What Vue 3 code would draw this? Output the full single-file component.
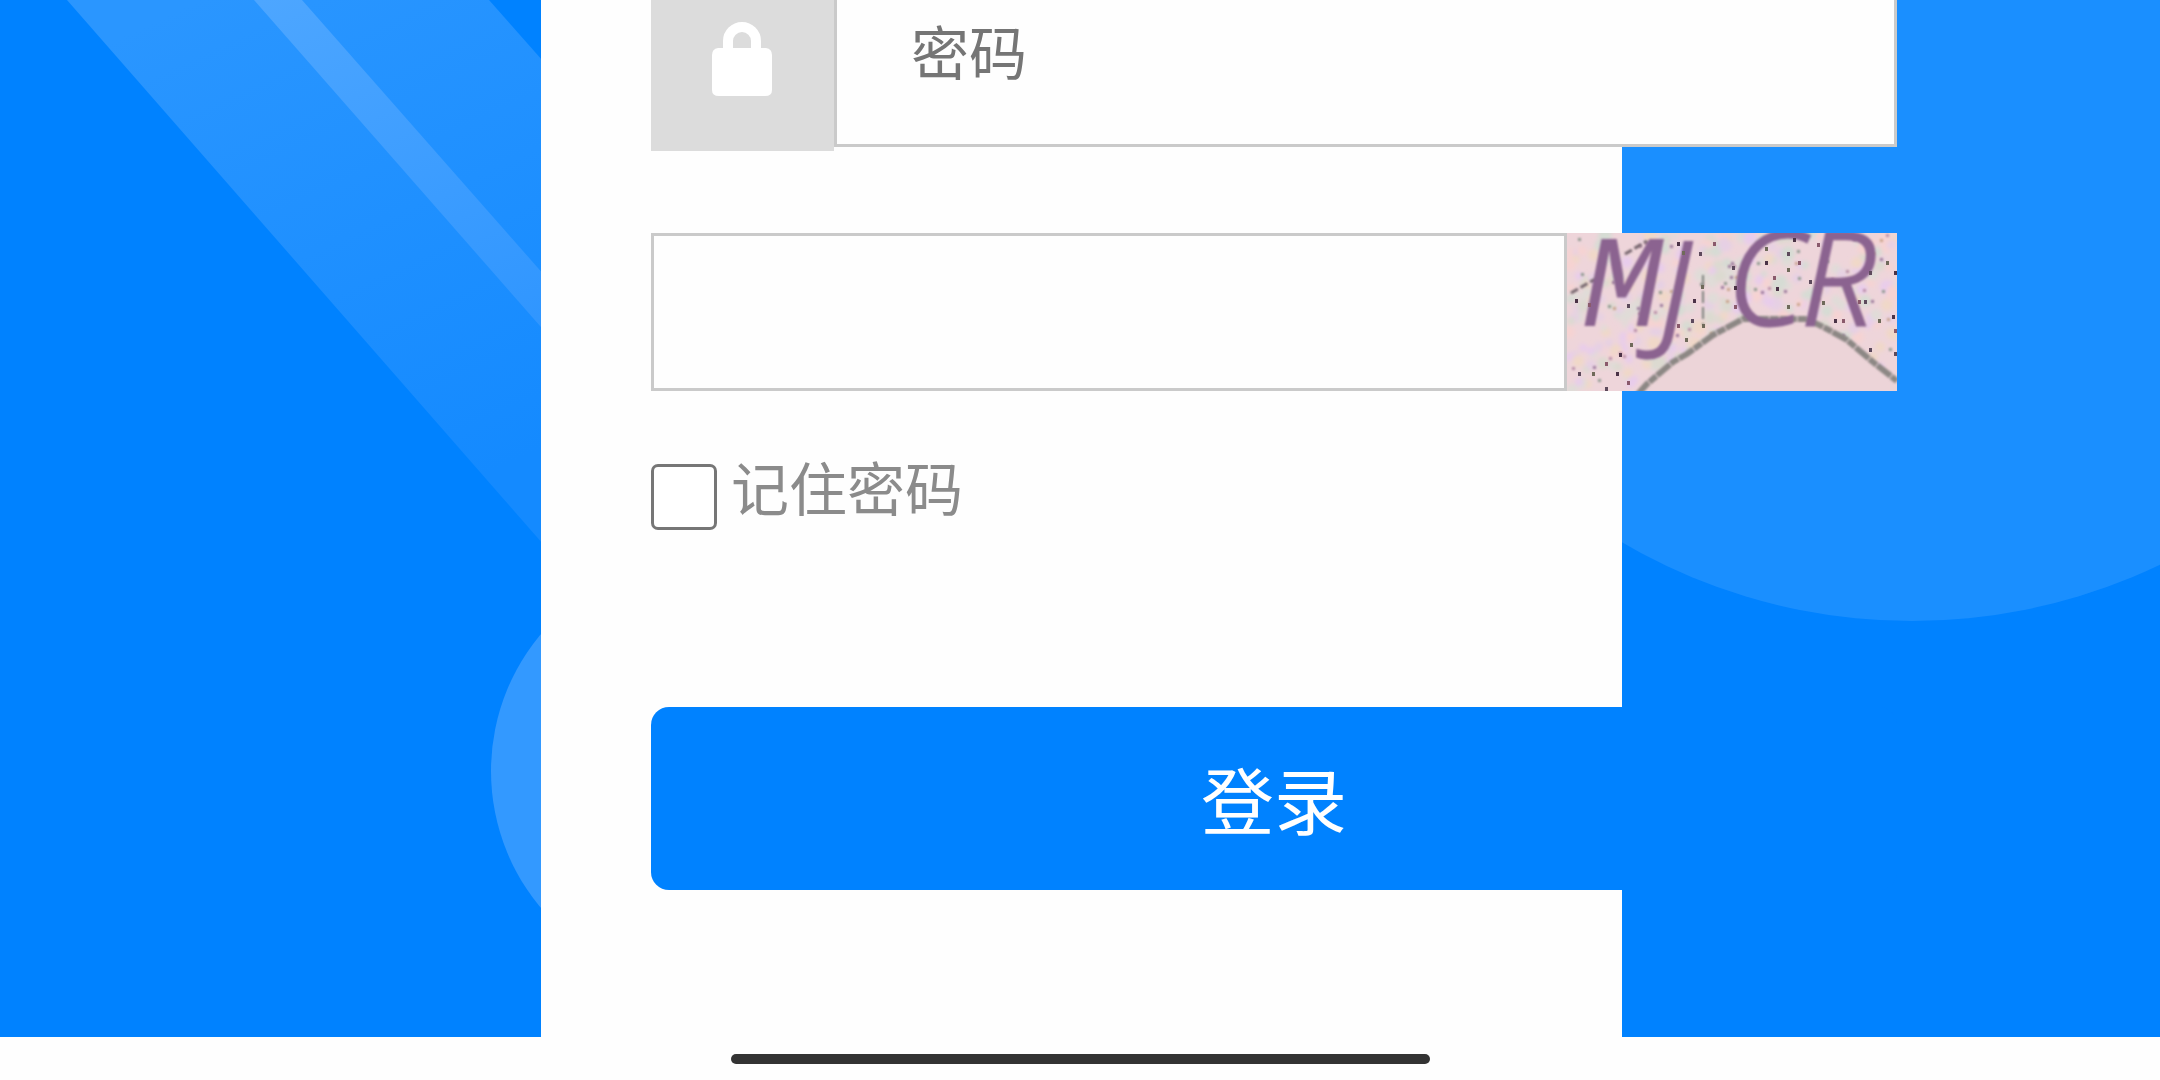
<script setup>
import { ref } from 'vue'

const password = ref('')
const captcha = ref('')
const remember = ref(false)

// Small seeded generator so the captcha grain is stable between renders
let seed = 20
const rand = () => {
  seed = (seed * 16807) % 2147483647
  return seed / 2147483647
}

const tints = ['#dcdad0', '#e8ccec', '#f6d3d2', '#d6dcd4', '#f0d8c8', '#e6d0e4', '#e0dcd8']
const patches = Array.from({ length: 420 }, (_, i) => ({
  x: Math.round(rand() * 330),
  y: Math.round(rand() * 158),
  r: 3 + Math.round(rand() * 4),
  fill: tints[i % tints.length],
}))

const inks = ['#b98fa8', '#8f9a90', '#c9a48c', '#9c7a9c']
const grains = Array.from({ length: 90 }, (_, i) => ({
  x: Math.round(rand() * 328),
  y: Math.round(rand() * 156),
  fill: inks[i % inks.length],
}))

const speckInks = ['#4b3347', '#8a5a6c', '#5d4a5c', '#6f6a5a']
const specks = [
  [9, 68], [22, 72], [61, 73], [116, 20], [111, 11], [147, 11], [133, 21], [135, 54],
  [127, 68], [111, 93], [125, 88], [136, 93], [168, 55], [168, 74], [166, 35], [199, 16],
  [199, 30], [207, 45], [221, 21], [221, 37], [227, 7], [232, 30], [243, 49], [221, 74],
  [210, 56], [251, 12], [303, 40], [320, 30], [328, 40], [292, 69], [298, 69], [312, 88],
  [326, 84], [328, 98], [303, 117], [256, 70], [268, 88], [276, 88], [328, 121], [64, 112],
  [53, 122], [39, 131], [12, 141], [26, 141], [50, 141], [61, 150], [39, 156], [119, 107],
]

const letters = [
  { char: 'M', x: 16, y: 93, face: 'mono' },
  { char: 'J', x: 92, y: 102, face: 'sans' },
  { char: 'C', x: 160, y: 92, face: 'sans' },
  { char: 'R', x: 234, y: 92, face: 'sans' },
]
</script>

<template>
  <div class="page">
    <main class="stage">
      <svg class="backdrop" viewBox="0 0 2160 1037" preserveAspectRatio="xMinYMin slice" aria-hidden="true">
        <defs>
          <linearGradient id="beam" gradientUnits="userSpaceOnUse" x1="200" y1="0" x2="430" y2="500">
            <stop offset="0" stop-color="#2a96ff" />
            <stop offset="1" stop-color="#148aff" />
          </linearGradient>
          <linearGradient id="ray" gradientUnits="userSpaceOnUse" x1="260" y1="0" x2="430" y2="370">
            <stop offset="0" stop-color="#4da6ff" />
            <stop offset="1" stop-color="#3096ff" />
          </linearGradient>
        </defs>
        <path d="M67 0H489L641 172V656Z" fill="url(#beam)" />
        <path d="M254 0H302L641 385V441Z" fill="url(#ray)" />
        <circle cx="704" cy="771" r="213" fill="#3399ff" />
        <circle cx="1912" cy="46" r="575" fill="#1a8fff" />
      </svg>

      <section class="card">
        <form class="login" @submit.prevent>
          <div class="row password-row">
            <label class="lock" for="password" aria-label="密码">
              <svg width="60" height="76" viewBox="0 0 60 76" aria-hidden="true">
                <path d="M16 32V20a14 14 0 0 1 28 0v12" fill="none" stroke="#fff" stroke-width="10" />
                <path d="M6 27H54Q60 28 60 34V69Q60 75 53 75H7Q0 75 0 69V34Q0 28 6 27Z" fill="#fff" />
              </svg>
            </label>
            <input id="password" v-model="password" class="field password" type="password" placeholder="密码" />
          </div>

          <div class="row captcha-row">
            <input v-model="captcha" class="field code" type="text" aria-label="验证码" />
            <svg class="captcha" viewBox="0 0 330 158" role="img" aria-label="MJCR">
              <defs>
                <filter id="soft" x="0" y="0" width="1" height="1"><feGaussianBlur stdDeviation="2" /></filter>
                <filter id="fine"><feGaussianBlur stdDeviation="1" /></filter>
              </defs>
              <rect width="330" height="158" fill="#eed5da" />
              <g filter="url(#soft)">
                <circle v-for="(p, i) in patches" :key="i" :cx="p.x" :cy="p.y" :r="p.r" :fill="p.fill" />
              </g>
              <g filter="url(#fine)">
                <rect v-for="(g, i) in grains" :key="i" :x="g.x" :y="g.y" width="3" height="3" :fill="g.fill" />
              </g>
              <path d="M70 158L106 129L146 102L176 86L240 85L262 95L280 107L306 129L330 147V158Z" fill="#ecd4d8" />
              <g filter="url(#fine)">
                <path
                  d="M70 162L80 151L106 129L120 121L146 102L176 86H240L262 97L280 107L306 129L330 148"
                  fill="none" stroke="#8c8784" stroke-width="6" stroke-dasharray="17 1 9 1"
                />
                <path d="M4 60L30 45M58 21L80 8" fill="none" stroke="#75656d" stroke-width="3" stroke-dasharray="8 3" />
                <path d="M136 42V92" fill="none" stroke="#7d827c" stroke-width="2" stroke-dasharray="12 4" />
                <text
                  v-for="l in letters" :key="l.char" class="letter" :class="l.face" :x="l.x" :y="l.y"
                >{{ l.char }}</text>
              </g>
              <rect
                v-for="([x, y], i) in specks" :key="i" :x="x - 1" :y="y - 2" width="3" height="4"
                :fill="speckInks[i % speckInks.length]"
              />
            </svg>
          </div>

          <label class="remember">
            <input v-model="remember" class="box" type="checkbox" />
            <span>记住密码</span>
          </label>

          <button class="submit" type="submit">登录</button>
        </form>
      </section>
    </main>

    <footer class="system-bar">
      <div class="indicator"></div>
    </footer>
  </div>
</template>

<style>
body {
  margin: 0;
  background: #fefefe;
}
</style>

<style scoped>
.page {
  overflow: hidden;
  font-family: "Noto Sans CJK SC", sans-serif;
}

.stage {
  position: relative;
  display: grid;
  grid-template-columns: 541fr 1081fr 538fr;
  background: #0082ff;
}

.backdrop {
  position: absolute;
  inset: 0;
  width: 100%;
  height: 100%;
}

.card {
  position: relative;
  grid-column: 2;
  min-width: 0;
  display: flex;
  flex-direction: column;
  padding: 0 0 147px 110px;
  background: #fefefe;
}

.login {
  display: flex;
  flex-direction: column;
  margin-right: -275px;
}

.row {
  display: flex;
}

.password-row {
  height: 191px;
  margin-top: -40px;
}

.lock {
  box-sizing: border-box;
  display: flex;
  flex: none;
  align-items: center;
  align-self: flex-end;
  justify-content: center;
  width: 183px;
  height: 183px;
  padding: 0 2px 2px 0;
  background: #dcdcdc;
}

.field {
  box-sizing: border-box;
  flex: 1;
  min-width: 0;
  margin: 0;
  border: 3px solid #cacaca;
  border-radius: 0;
  outline: none;
  background: #fefefe;
  font-family: inherit;
  font-size: 58px;
  color: #333;
}

.password {
  height: 187px;
  padding: 0 74px 8px;
}

.password::placeholder {
  color: #757575;
}

.captcha-row {
  height: 158px;
  margin-top: 82px;
}

.code {
  height: 158px;
  padding: 0 40px;
}

.captcha {
  display: block;
  flex: none;
  width: 330px;
  height: 158px;
}

.letter {
  font-style: italic;
  fill: #8b6390;
}

.mono {
  font-family: "Liberation Mono", monospace;
  font-size: 132px;
}

.sans {
  font-family: "Open Sans", sans-serif;
  font-size: 130px;
  font-weight: 300;
  stroke: #8b6390;
  stroke-width: 3px;
}

.remember {
  display: flex;
  align-self: flex-start;
  gap: 14px;
  margin-top: 73px;
  font-size: 58px;
  line-height: 44px;
  color: #8b8b8b;
}

.box {
  appearance: none;
  box-sizing: border-box;
  flex: none;
  width: 66px;
  height: 66px;
  margin: 0;
  border: 3px solid #767676;
  border-radius: 7px;
  background: #fff;
}

.box:checked {
  border-color: #0082ff;
  background: #0082ff;
}

.submit {
  height: 183px;
  margin: 177px 0 0;
  padding: 0 0 4px;
  border: 0;
  border-radius: 18px;
  background: #0082ff;
  font-family: inherit;
  font-size: 73px;
  color: #fff;
}

.system-bar {
  display: flex;
  justify-content: center;
  padding: 17px 0 16px;
}

.indicator {
  width: 699px;
  height: 10px;
  border-radius: 5px;
  background: #333;
}
</style>
